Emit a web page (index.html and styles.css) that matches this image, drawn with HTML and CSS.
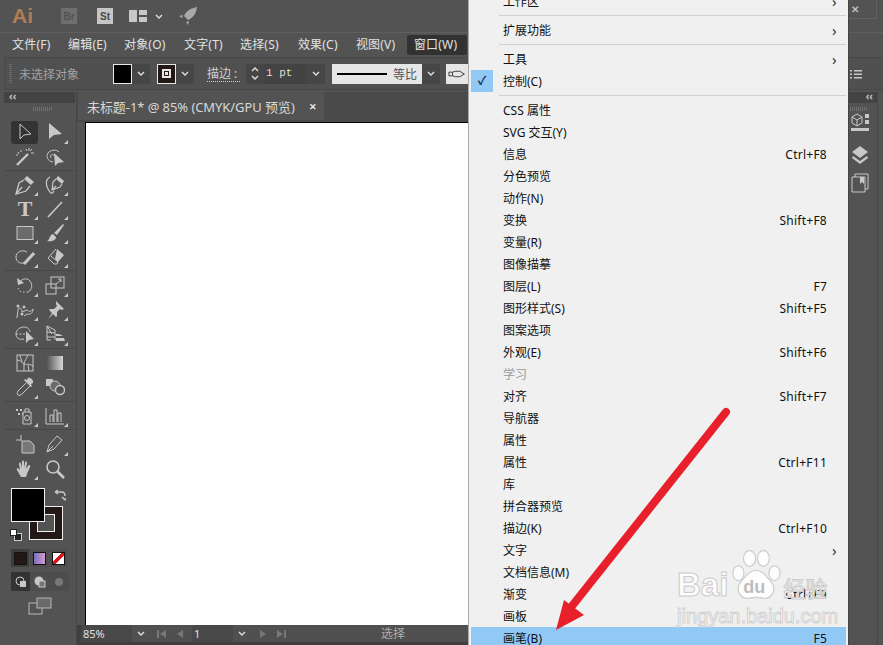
FILE: index.html
```html
<!DOCTYPE html>
<html lang="zh-CN">
<head>
    <meta charset="UTF-8">
    <title>Adobe Illustrator</title>
    <link rel="stylesheet" href="styles.css">
</head>
<body>
<div class="app">
    <!-- app bar -->
    <header class="titlebar">
        <span class="ai-logo">Ai</span>
        <span class="app-chip chip-br">Br</span>
        <span class="app-chip chip-st">St</span>
        <svg class="layout-icon" viewBox="0 0 18 12"><path d="M0 0h8v12H0zM10 0h8v5h-8zM10 7h8v5h-8z" fill="#c8c8c8"/></svg>
        <svg class="chev chev-top" viewBox="0 0 8 5"><path d="M1 1l3 3 3-3" /></svg>
        <svg class="rocket" viewBox="0 0 18 18"><path d="M18 0C12 1 7 4 5 9l4 4c5-2 8-6 9-13zM4 8L0 9l3 2zM10 14l-1 4-2-3z" fill="#a8a8a8"/></svg>
        <div class="window-close"><span>✕</span></div>
    </header>

    <nav class="menubar">
        <span class="menubar-item">文件(F)</span>
        <span class="menubar-item">编辑(E)</span>
        <span class="menubar-item">对象(O)</span>
        <span class="menubar-item">文字(T)</span>
        <span class="menubar-item">选择(S)</span>
        <span class="menubar-item">效果(C)</span>
        <span class="menubar-item">视图(V)</span>
        <span class="menubar-item active">窗口(W)</span>
    </nav>

    <!-- control panel -->
    <div class="controlbar">
        <div class="control-panel">
            <span class="grip"></span>
            <span class="no-selection">未选择对象</span>
            <span class="swatch swatch-fill"></span>
            <span class="drop"><svg class="chev" viewBox="0 0 8 5"><path d="M1 1l3 3 3-3" /></svg></span>
            <span class="swatch swatch-stroke"><i></i></span>
            <span class="drop"><svg class="chev" viewBox="0 0 8 5"><path d="M1 1l3 3 3-3" /></svg></span>
            <span class="stroke-label">描边 :</span>
            <span class="spinner">
                <svg class="chev flip" viewBox="0 0 8 5"><path d="M1 1l3 3 3-3" /></svg>
                <svg class="chev" viewBox="0 0 8 5"><path d="M1 1l3 3 3-3" /></svg>
            </span>
            <span class="weight">1 pt</span>
            <span class="drop"><svg class="chev" viewBox="0 0 8 5"><path d="M1 1l3 3 3-3" /></svg></span>
            <span class="stroke-preview"><i></i><b>等比</b></span>
            <span class="drop"><svg class="chev" viewBox="0 0 8 5"><path d="M1 1l3 3 3-3" /></svg></span>
            <span class="brush-preview">
                <svg viewBox="0 0 22 10"><path d="M1 3h4v4H1zM5 3l3-1h5l5 3-5 3H8L5 7" fill="none" stroke="#333"/></svg>
            </span>
        </div>
    </div>

    <div class="workspace">
        <!-- tools -->
        <aside class="toolbar">
            <div class="panel-head"><span>‹‹</span></div>
            <div class="panel-grip"></div>

            <div class="tool-group">
                <span class="tool selected"><svg viewBox="0 0 20 20"><path class="ln" d="M5 2v15l4-4 7-1z"/></svg></span>
                <span class="tool more"><svg viewBox="0 0 20 20"><path class="fl" d="M4 1v16l5-4 8-1z"/></svg></span>
                <span class="tool"><svg viewBox="0 0 20 20"><path class="ln" d="M2 18L13 7" stroke-width="2.4"/><path class="ln" d="M14 1v3M16 6h3M11 2l1 2M17 2l-2 2M3 5l1 2M6 3v2M1 8h2"/></svg></span>
                <span class="tool"><svg viewBox="0 0 20 20"><path class="ln" d="M8 15C2 14 1 9 3 6s8-4 11-1"/><path class="ln" d="M6 11c-2-3 2-5 3-2"/><path class="fl" d="M9 6l1 13 3-3 6-1z"/></svg></span>
            </div>

            <div class="tool-group tight">
                <span class="tool more"><svg viewBox="0 0 20 20"><path class="fl" d="M12 1l7 6-3 3-7-6z"/><path class="ln" d="M9 5L4 8 1 19l10-3 4-5M1 19l6-7" stroke-width="1.3"/></svg></span>
                <span class="tool more"><svg viewBox="0 0 20 20"><path class="fl" d="M13 1l6 5-2 3-6-5z"/><path class="ln" d="M11 4L8 7 7 15l8-3 2-3M7 15l4-4" stroke-width="1.2"/><path class="ln" d="M5 2C0 5 1 10 3 14s4 6 6 2" stroke-width="1.2"/></svg></span>
                <span class="tool more"><span class="type-t">T</span></span>
                <span class="tool more"><svg viewBox="0 0 20 20"><path class="ln" d="M3 18L17 3" stroke-width="1.6"/></svg></span>
                <span class="tool more"><svg viewBox="0 0 20 20"><rect x="2" y="3.5" width="16" height="13" fill="#6b6b6b" stroke="#c8c8c8"/></svg></span>
                <span class="tool more"><svg viewBox="0 0 20 20"><path class="fl" d="M18 1l1 1-7 10-3-2zM8 11l3 3c0 3-4 5-9 4 3-1 2-6 6-7z"/></svg></span>
                <span class="tool more"><svg viewBox="0 0 20 20"><path class="ln" d="M11 15C6 18 1 15 1 10s6-8 11-5"/><path class="ln" d="M9 17L19 6" stroke-width="3"/></svg></span>
                <span class="tool more"><svg viewBox="0 0 20 20"><path class="fl" d="M12 2l7 6-6 7-3-3z"/><path class="ln" d="M11 2L3 11l6 6h3l1-2-7-6"/></svg></span>
            </div>

            <div class="tool-group">
                <span class="tool more"><svg viewBox="0 0 20 20"><path class="ln" d="M4 9c1-5 8-7 11-3s2 9-2 11"/><path class="ln" d="M13 17H7c-2 0-3-2-4-4" stroke-dasharray="1.5 2"/><path class="fl" d="M2 3l1 7 6-2z"/></svg></span>
                <span class="tool more"><svg viewBox="0 0 20 20"><rect class="ln" x="1" y="9" width="10" height="10"/><rect class="ln" x="6" y="2" width="13" height="11"/><path class="ln" d="M11 9l5-4M13 4h3v3"/></svg></span>
                <span class="tool more"><svg viewBox="0 0 20 20"><path class="ln" d="M2 18c0-3 1-5 1-9 2-2 4 0 4 3l5-2c2 0 2 4 6-1 0 4-3 6-6 5l-3 2"/><circle class="fl" cx="3" cy="6" r="1.5"/><circle class="fl" cx="9" cy="7" r="1.5"/><circle class="fl" cx="7" cy="14" r="1.5"/></svg></span>
                <span class="tool more"><svg viewBox="0 0 20 20"><path class="fl" d="M11 1l8 8-2 1-2-1-3 3v4l-1 1-3-3-5 5 4-6-3-3 1-1h4l3-3-1-2z"/></svg></span>
                <span class="tool more"><svg viewBox="0 0 20 20"><path class="ln" d="M9 15c-5 1-8-1-8-5s4-7 8-7 6 3 6 5"/><path class="ln" d="M1 10h11" stroke-dasharray="2 1.5"/><path class="fl" d="M11 7v12l3-3 5-1z"/></svg></span>
                <span class="tool more"><svg viewBox="0 0 20 20"><path class="ln" d="M2 2v14h4M2 2l8 4v10M2 2l5 8M2 8l8 1M2 13h8"/><path class="fl" d="M11 10h3l4 2h-7zM11 14h8l1 3h-9z"/></svg></span>
            </div>

            <div class="tool-group">
                <span class="tool"><svg viewBox="0 0 20 20"><rect class="ln" x="2" y="2" width="16" height="16"/><path class="ln" d="M2 7c4 0 5 3 7 4s4-1 9 2M9 11V18M9 11c0-3 3-6 4-9M5 2c0 3 2 5 2 7M13 12l1 6"/></svg></span>
                <span class="tool"><svg viewBox="0 0 20 20"><defs><linearGradient id="toolGrad"><stop offset="0" stop-color="#555"/><stop offset="1" stop-color="#d8d8d8"/></linearGradient></defs><rect x="2" y="3" width="16" height="14" fill="url(#toolGrad)"/></svg></span>
                <span class="tool more"><svg viewBox="0 0 20 20"><path class="ln" d="M11 6L3 14c-1 2-1 3 0 4 1 1 3 0 4-1l8-8"/><path class="fl" d="M13 1c2-1 6 2 5 5l-2 1 1 2-1 1-7-7 1-1 2 1z"/></svg></span>
                <span class="tool"><svg viewBox="0 0 20 20"><rect class="fl" x="1" y="2" width="7" height="7"/><circle cx="10" cy="9" r="5" fill="#6b6b6b" stroke="#c8c8c8"/><circle cx="15" cy="13" r="4.5" fill="#535353" stroke="#c8c8c8" stroke-width="1.4"/></svg></span>
            </div>

            <div class="tool-group">
                <span class="tool more"><svg viewBox="0 0 20 20"><path class="ln" d="M8 6h8v12H8zM10 6V3h4v3"/><circle class="ln" cx="12" cy="12" r="2.5"/><path class="fl" d="M1 3h2v2H1zM5 3h2v2H5zM3 7h2v2H3zM7 7h1v2H7z"/></svg></span>
                <span class="tool more"><svg viewBox="0 0 20 20"><path class="ln" d="M1 2v16h18"/><path class="ln" d="M5 16V9h3v7M9 16V4h3v12M13 16V7h3v9"/></svg></span>
            </div>

            <div class="tool-group no-rule">
                <span class="tool"><svg viewBox="0 0 20 20"><path class="ln" d="M6 1v6M1 6h5"/><path d="M7 7h8l4 4v8H7z" fill="#777" stroke="#c8c8c8"/></svg></span>
                <span class="tool more"><svg viewBox="0 0 20 20"><path class="ln" d="M2 18l2-7 8-9 5 4-8 9zM2 18l6-6"/></svg></span>
                <span class="tool more"><svg viewBox="0 0 20 20"><path class="fl" d="M6 18L2 11c-1-2 1-2 2-1l1 1-1-6c0-2 2-2 2 0l1 4 0-6c0-2 2-2 2 0v6l1-5c0-2 2-2 2 0l-1 6 2-3c1-2 3-1 2 1l-3 7-1 3z"/></svg></span>
                <span class="tool"><svg viewBox="0 0 20 20"><circle class="ln" cx="8" cy="8" r="6" stroke-width="1.6"/><path class="ln" d="M12.5 12.5L19 19" stroke-width="2.6"/></svg></span>
            </div>

            <!-- fill and stroke -->
            <div class="color-box">
                <span class="big-stroke"><i></i></span>
                <span class="big-fill"></span>
                <svg class="swap-icon" viewBox="0 0 12 12"><path d="M1 3h7c2 0 3 2 3 4M1 3l3-2M1 3l3 2M11 11L8 8M11 11l2-3" fill="none" stroke="#c8c8c8" stroke-width="1.4"/></svg>
                <span class="default-colors"><i></i><b></b></span>
            </div>
            <div class="paint-modes">
                <span class="mode on"><i class="mode-color"></i></span>
                <span class="mode"><i class="mode-grad"></i></span>
                <span class="mode"><i class="mode-none"></i></span>
            </div>
            <div class="draw-modes">
                <span class="draw on"><svg viewBox="0 0 14 14"><circle class="ln" cx="6" cy="6" r="4"/><rect class="fl" x="6" y="6" width="6" height="6"/></svg></span>
                <span class="draw"><svg viewBox="0 0 14 14"><circle class="fl" cx="6" cy="6" r="4.5"/><rect x="6" y="6" width="6" height="6" fill="#777" stroke="#c8c8c8"/></svg></span>
                <span class="draw off"><svg viewBox="0 0 14 14"><circle cx="7" cy="7" r="4" fill="#777"/></svg></span>
            </div>
            <svg class="screen-mode" viewBox="0 0 24 18"><rect x="1" y="6" width="13" height="11" fill="none" stroke="#b8b8b8"/><rect x="9" y="1" width="14" height="10" fill="#6a6a6a" stroke="#b8b8b8"/></svg>
        </aside>

        <!-- document -->
        <main class="doc">
            <div class="tabbar">
                <div class="tab">
                    <span>未标题-1* @ 85% (CMYK/GPU 预览)</span>
                    <b class="tab-close">✕</b>
                </div>
            </div>
            <div class="canvas-wrap">
                <div class="canvas"></div>
            </div>
            <div class="statusbar">
                <span class="status-field zoom-field">85%</span>
                <span class="status-drop"><svg class="chev" viewBox="0 0 8 5"><path d="M1 1l3 3 3-3" /></svg></span>
                <span class="nav">
                    <svg viewBox="0 0 12 10"><path d="M1 1h2v8H1zM10 1v8L4 5z"/></svg>
                    <svg viewBox="0 0 12 10"><path d="M9 1v8L3 5z"/></svg>
                </span>
                <span class="status-field page-field">1</span>
                <span class="status-drop"><svg class="chev" viewBox="0 0 8 5"><path d="M1 1l3 3 3-3" /></svg></span>
                <span class="nav">
                    <svg viewBox="0 0 12 10"><path d="M3 1v8l6-4z"/></svg>
                    <svg viewBox="0 0 12 10"><path d="M2 1v8l6-4zM9 1h2v8H9z"/></svg>
                </span>
                <span class="status-text">选择</span>
            </div>
        </main>

        <!-- right dock -->
        <aside class="dock">
            <div class="panel-head"><span>‹‹</span></div>
            <div class="panel-grip"></div>
            <svg class="dock-icon icon-cube" viewBox="0 0 20 20"><path class="ln" d="M2 5l5-3 5 3v6l-5 3-5-3zM2 5l5 3 5-3M7 8v6"/><path class="fl" d="M15 2h4v4h-4zM15 8h4v4h-4zM1 16h18v3H1z"/></svg>
            <svg class="dock-icon icon-layers" viewBox="0 0 20 20"><path class="fl" d="M10 1l8 6-8 6-8-6zM3 11l7 5 7-5 1 2-8 6-8-6z"/></svg>
            <svg class="dock-icon icon-book" viewBox="0 0 20 20"><path class="ln" d="M2 4h13v15H2zM5 4V1h13v15h-3"/><path class="fl" d="M10 4h4v7l-2-2-2 2z"/></svg>
        </aside>
    </div>

    <svg class="dock-list" viewBox="0 0 12 10"><path d="M0 1h2v1.4H0zM4 1h8v1.4H4zM0 4.5h2v1.4H0zM4 4.5h8v1.4H4zM0 8h2v1.4H0zM4 8h8v1.4H4z" fill="#c8c8c8"/></svg>

    <!-- window menu -->
    <div class="menu">
        <div class="menu-row"><span>工作区</span><em></em><i>›</i></div>
        <div class="menu-sep"></div>
        <div class="menu-row"><span>扩展功能</span><em></em><i>›</i></div>
        <div class="menu-sep"></div>
        <div class="menu-row"><span>工具</span><em></em><i>›</i></div>
        <div class="menu-row checked"><span>控制(C)</span><em></em><i></i></div>
        <div class="menu-sep"></div>
        <div class="menu-row"><span>CSS 属性</span><em></em><i></i></div>
        <div class="menu-row"><span>SVG 交互(Y)</span><em></em><i></i></div>
        <div class="menu-row"><span>信息</span><em>Ctrl+F8</em><i></i></div>
        <div class="menu-row"><span>分色预览</span><em></em><i></i></div>
        <div class="menu-row"><span>动作(N)</span><em></em><i></i></div>
        <div class="menu-row"><span>变换</span><em>Shift+F8</em><i></i></div>
        <div class="menu-row"><span>变量(R)</span><em></em><i></i></div>
        <div class="menu-row"><span>图像描摹</span><em></em><i></i></div>
        <div class="menu-row"><span>图层(L)</span><em>F7</em><i></i></div>
        <div class="menu-row"><span>图形样式(S)</span><em>Shift+F5</em><i></i></div>
        <div class="menu-row"><span>图案选项</span><em></em><i></i></div>
        <div class="menu-row"><span>外观(E)</span><em>Shift+F6</em><i></i></div>
        <div class="menu-row disabled"><span>学习</span><em></em><i></i></div>
        <div class="menu-row"><span>对齐</span><em>Shift+F7</em><i></i></div>
        <div class="menu-row"><span>导航器</span><em></em><i></i></div>
        <div class="menu-row"><span>属性</span><em></em><i></i></div>
        <div class="menu-row"><span>属性</span><em>Ctrl+F11</em><i></i></div>
        <div class="menu-row"><span>库</span><em></em><i></i></div>
        <div class="menu-row"><span>拼合器预览</span><em></em><i></i></div>
        <div class="menu-row"><span>描边(K)</span><em>Ctrl+F10</em><i></i></div>
        <div class="menu-row"><span>文字</span><em></em><i>›</i></div>
        <div class="menu-row"><span>文档信息(M)</span><em></em><i></i></div>
        <div class="menu-row"><span>渐变</span><em>Ctrl+F9</em><i></i></div>
        <div class="menu-row"><span>画板</span><em></em><i></i></div>
        <div class="menu-row hover"><span>画笔(B)</span><em>F5</em><i></i></div>
    </div>

    <!-- baidu watermark -->
    <div class="watermark">
        <div class="wm-top">
            <span class="wm-bai">Bai</span>
            <span class="wm-paw">
                <svg viewBox="0 0 54 56">
                    <g fill="#fdfdfd" stroke="#cfcfcf" stroke-width="1.4">
                        <ellipse cx="8" cy="25" rx="6" ry="8"/>
                        <ellipse cx="20" cy="9" rx="6.5" ry="8.5"/>
                        <ellipse cx="35" cy="9" rx="6.5" ry="8.5"/>
                        <ellipse cx="47" cy="25" rx="6" ry="8"/>
                        <path d="M27 22c8 0 12 8 17 13 5 7 1 18-9 17-3 0-5-1-8-1s-5 1-8 1C9 53 5 42 10 35c5-5 9-13 17-13z"/>
                    </g>
                </svg>
                <b>du</b>
            </span>
            <span class="wm-cn">经验</span>
        </div>
        <div class="wm-url">jingyan.baidu.com</div>
    </div>

    <!-- red arrow annotation -->
    <svg class="annotation" viewBox="0 0 883 645">
        <path d="M726 412L572 606" stroke="#e8202c" stroke-width="8" stroke-linecap="round" fill="none"/>
        <path d="M556 630L564 600L584 615z" fill="#e8202c"/>
    </svg>
</div>
</body>
</html>
```

FILE: styles.css
```css
* {
    box-sizing: border-box;
}
body {
    margin: 0;
    background-color: #535353;
    font-family: "Noto Sans", "Noto Sans CJK SC", sans-serif;
    font-size: 12px;
}
.app {
    position: relative;
    width: 883px;
    height: 645px;
    overflow: hidden;
    display: flex;
    flex-direction: column;
    background-color: #535353;
    color: #d6d6d6;
}
.ln {
    fill: none;
    stroke: #c8c8c8;
}
.fl {
    fill: #c8c8c8;
}
.chev {
    width: 8px;
    height: 5px;
    fill: none;
    stroke: #e0e0e0;
    stroke-width: 1.4;
}
.chev.flip {
    transform: scaleY(-1);
}

/* app bar */
.titlebar {
    position: relative;
    height: 33px;
    flex: none;
    display: flex;
    align-items: center;
    padding-left: 12px;
    border-bottom: 1px solid #5f5f5f;
}
.ai-logo {
    width: 49px;
    color: #b27d55;
    font-family: "Liberation Sans", sans-serif;
    font-size: 21px;
    font-weight: bold;
}
.app-chip {
    width: 16px;
    height: 16px;
    margin-right: 20px;
    display: flex;
    align-items: center;
    justify-content: center;
    font-family: "Liberation Sans", sans-serif;
    font-size: 10px;
    font-weight: bold;
}
.chip-br {
    background-color: #6e6e6e;
    color: #525252;
}
.chip-st {
    margin-right: 16px;
    background-color: #c6c6c6;
    color: #484848;
}
.layout-icon {
    width: 18px;
    height: 12px;
}
.chev-top {
    margin-left: 8px;
}
.rocket {
    width: 18px;
    height: 18px;
    margin-left: 16px;
}
.window-close {
    position: absolute;
    left: 840px;
    top: 0;
    width: 37px;
    height: 19px;
    padding-left: 10px;
    border: 1px solid #626262;
    border-top: none;
    border-radius: 0 0 3px 3px;
    color: #bdbdbd;
    font-size: 10px;
    font-weight: bold;
    line-height: 19px;
}

/* menu bar */
.menubar {
    height: 24px;
    flex: none;
    display: flex;
    align-items: center;
    gap: 2.6px;
    padding-left: 5px;
}
.menubar-item {
    width: 53.4px;
    padding-left: 7px;
    line-height: 20px;
    color: #e2e2e2;
    border-radius: 2px;
    white-space: nowrap;
    letter-spacing: 0.2px;
}
.menubar-item:nth-child(5),
.menubar-item:nth-child(6),
.menubar-item:nth-child(7) {
    width: 55.4px;
}
.menubar-item:nth-child(3) {
    width: 57.4px;
}
.menubar-item.active {
    background-color: #323232;
    width: 60px;
}

/* control bar */
.controlbar {
    height: 35px;
    flex: none;
    padding-left: 4px;
}
.control-panel {
    height: 33px;
    display: flex;
    align-items: center;
    border: 1px solid #474747;
    border-right: none;
    background-color: #505050;
    padding-left: 4px;
}
.grip {
    width: 3px;
    height: 20px;
    margin-right: 7px;
    background-image: repeating-linear-gradient(#6c6c6c 0 1px, transparent 1px 2px);
}
.no-selection {
    width: 94px;
    color: #a2a2a2;
    letter-spacing: 0;
}
.swatch {
    width: 19px;
    height: 20px;
    border: 1px solid #e8e8e8;
}
.swatch-fill {
    background-color: #000;
}
.swatch-stroke {
    margin-left: 1px;
    background-color: #231815;
    display: flex;
    align-items: center;
    justify-content: center;
}
.swatch-stroke i {
    width: 9px;
    height: 9px;
    border: 2px solid #e8e8e8;
    box-shadow: inset 0 0 0 1px #231815, inset 0 0 0 3px #e8e8e8;
}
.drop {
    width: 18px;
    height: 20px;
    margin-right: 6px;
    display: flex;
    align-items: center;
    justify-content: center;
    background-color: #464646;
}
.stroke-label {
    width: 33px;
    margin: 0 6px 0 7px;
    color: #d0d0d0;
    border-bottom: 1px dotted #cfcfcf;
    line-height: 15px;
    white-space: nowrap;
}
.spinner {
    width: 18px;
    height: 20px;
    display: flex;
    flex-direction: column;
    align-items: center;
    justify-content: center;
    gap: 3px;
    background-color: #464646;
}
.weight {
    width: 43px;
    height: 20px;
    padding-left: 2px;
    background-color: #434343;
    color: #dedede;
    font-family: "Liberation Mono", monospace;
    font-size: 11px;
    line-height: 18px;
    white-space: pre;
}
.weight + .drop {
    margin-right: 7px;
}
.stroke-preview {
    width: 90px;
    height: 20px;
    display: flex;
    align-items: center;
    gap: 6px;
    padding-left: 5px;
    background-color: #e6e6e6;
}
.stroke-preview i {
    width: 50px;
    height: 2px;
    background-color: #000;
}
.stroke-preview b {
    color: #555;
    font-weight: normal;
}
.brush-preview {
    width: 40px;
    height: 20px;
    padding: 5px 0 0 2px;
    background-color: #e6e6e6;
}
.brush-preview svg {
    display: block;
    width: 20px;
    height: 10px;
}

/* main area */
.workspace {
    flex: 1;
    display: flex;
    min-height: 0;
}
.toolbar {
    width: 77px;
    flex: none;
    padding-left: 4px;
    display: flex;
    flex-direction: column;
    border-right: 1px solid #464646;
}
.toolbar > * {
    width: 71px;
}
.panel-head {
    height: 11px;
    flex: none;
    background-color: #434343;
    color: #c4c4c4;
    font-size: 10px;
    font-weight: bold;
    line-height: 9px;
    padding-left: 5px;
}
.panel-grip {
    height: 4px;
    flex: none;
    margin: 4px auto 5px;
    width: 20px;
    background-image: repeating-linear-gradient(90deg, #6f6f6f 0 1px, transparent 1px 2px);
}
.toolbar > .panel-grip {
    width: 20px;
    margin: 4px 0 9px 29px;
}
.tool-group {
    display: grid;
    grid-template-columns: 30px 30px;
    grid-auto-rows: 24.5px;
    padding: 0 0 1px 6px;
    margin-bottom: 2px;
    border-bottom: 1px solid #474747;
}
.tool-group.tight {
    grid-auto-rows: 24px;
}
.tool-group.no-rule {
    border-bottom: none;
    margin-bottom: 6px;
}
.tool {
    position: relative;
    display: flex;
    align-items: center;
    justify-content: center;
}
.tool svg {
    width: 20px;
    height: 20px;
}
.tool.selected {
    background-color: #333;
    border-radius: 3px;
    margin: 1px 2px 1px 1px;
}
.tool.more::after {
    content: "";
    position: absolute;
    right: 2px;
    bottom: 1px;
    border-left: 4px solid transparent;
    border-bottom: 4px solid #c8c8c8;
}
.type-t {
    color: #c8c8c8;
    font-family: "Liberation Serif", serif;
    font-size: 22px;
    font-weight: bold;
    line-height: 22px;
}

/* fill and stroke */
.color-box {
    position: relative;
    height: 55px;
    flex: none;
}
.big-fill {
    position: absolute;
    left: 7px;
    top: 0;
    width: 34px;
    height: 34px;
    background-color: #000;
    border: 1px solid #f0f0f0;
}
.big-stroke {
    position: absolute;
    left: 25px;
    top: 18px;
    width: 34px;
    height: 34px;
    background-color: #231815;
    border: 1px solid #f0f0f0;
    padding: 7px;
}
.big-stroke i {
    display: block;
    width: 18px;
    height: 18px;
    background-color: #535353;
    border: 1px solid #f0f0f0;
}
.swap-icon {
    position: absolute;
    left: 50px;
    top: 1px;
    width: 12px;
    height: 12px;
}
.default-colors {
    position: absolute;
    left: 6px;
    top: 41px;
    width: 12px;
    height: 12px;
}
.default-colors i {
    position: absolute;
    left: 0;
    top: 0;
    width: 7px;
    height: 7px;
    background-color: #fff;
    border: 1px solid #222;
    z-index: 1;
}
.default-colors b {
    position: absolute;
    right: 0;
    bottom: 0;
    width: 8px;
    height: 8px;
    background-color: #222;
    border: 1px solid #ccc;
}
.paint-modes {
    display: flex;
    height: 18px;
    flex: none;
    margin: 6px 0 0 7px;
    gap: 1px;
}
.mode {
    width: 18px;
    display: flex;
    align-items: center;
    justify-content: center;
    background-color: #4d4d4d;
}
.mode.on {
    background-color: #3d3d3d;
}
.mode i {
    display: block;
    width: 13px;
    height: 13px;
    border: 1px solid #111;
}
.mode-color {
    background-color: #231815;
}
.mode-grad {
    background: linear-gradient(90deg, #7a6fc0, #d49ad0);
}
.mode-none {
    background: linear-gradient(135deg, #fff 38%, #d8141c 38% 62%, #fff 62%);
}
.draw-modes {
    display: flex;
    height: 19px;
    flex: none;
    margin: 5px 0 0 7px;
    background-color: #4d4d4d;
    width: 58px;
}
.draw {
    width: 19px;
    display: flex;
    align-items: center;
    justify-content: center;
}
.draw.on {
    background-color: #333;
}
.draw svg {
    width: 14px;
    height: 14px;
}
.screen-mode {
    width: 24px;
    height: 18px;
    flex: none;
    margin: 6px 0 0 24px;
}

/* document */
.doc {
    flex: 1;
    min-width: 0;
    display: flex;
    flex-direction: column;
}
.tabbar {
    height: 30px;
    padding: 0 0 2px 1px;
    flex: none;
    background-color: #4a4a4a;
}
.tab {
    width: 246px;
    height: 28px;
    display: flex;
    align-items: center;
    justify-content: space-between;
    padding: 0 7px 0 9px;
    background-color: #535353;
    color: #d8d8d8;
    font-size: 13px;
    letter-spacing: -0.07px;
    white-space: nowrap;
}
.tab-close {
    font-size: 9px;
    color: #e8e8e8;
}
.canvas-wrap {
    flex: 1;
    min-height: 0;
    padding-left: 8px;
    background-color: #535353;
}
.canvas {
    height: 100%;
    background-color: #fff;
    border-left: 1px solid #000;
    border-top: 1px solid #000;
}
.statusbar {
    height: 20px;
    flex: none;
    display: flex;
    padding: 0 0 3px 4px;
    background-color: #3f3f3f;
    align-items: stretch;
}
.status-field {
    background-color: #484848;
    color: #e0e0e0;
    line-height: 17px;
    padding-left: 2px;
    font-size: 11px;
}
.zoom-field {
    width: 51px;
}
.page-field {
    width: 41px;
}
.status-drop {
    width: 18px;
    display: flex;
    align-items: center;
    justify-content: center;
    background-color: #505050;
}
.nav {
    width: 42px;
    display: flex;
    align-items: center;
    justify-content: center;
    gap: 6px;
    background-color: #505050;
}
.nav svg {
    width: 12px;
    height: 10px;
    fill: #787878;
}
.status-text {
    flex: 1;
    padding-left: 88px;
    background-color: #505050;
    color: #adadad;
    line-height: 17px;
}

/* right dock */
.dock {
    width: 30px;
    flex: none;
    margin-right: 5px;
    display: flex;
    flex-direction: column;
    border-right: 1px solid #464646;
}
.dock .panel-head {
    width: 100%;
    text-align: right;
    padding-right: 4px;
}
.dock .panel-grip {
    margin: 4px 0 0;
}
.dock-icon {
    width: 20px;
    height: 20px;
    flex: none;
    margin-left: 2px;
}
.icon-cube {
    margin-top: 1px;
}
.icon-layers {
    margin-top: 13px;
}
.icon-book {
    margin-top: 8px;
}
.dock-list {
    position: absolute;
    left: 850px;
    top: 69px;
    width: 12px;
    height: 10px;
}

/* window menu */
.menu {
    position: absolute;
    left: 469px;
    top: -10px;
    width: 379px;
    padding: 0 2px;
    background-color: #f0f0f0;
    box-shadow: -1px 0 0 #aaa, 1px 0 0 #444;
    color: #111;
}
.menu-row {
    height: 22px;
    display: grid;
    grid-template-columns: 32px 1fr auto 19px;
    align-items: center;
}
.menu-row span {
    grid-column: 2;
    white-space: nowrap;
}
.menu-row em {
    grid-column: 3;
    font-style: normal;
    letter-spacing: 0.25px;
}
.menu-row i {
    grid-column: 4;
    font-style: normal;
    font-size: 15px;
    line-height: 20px;
    padding-left: 5px;
    color: #333;
}
.menu-row.disabled {
    color: #9a9a9a;
}
.menu-row.hover {
    background-color: #90c8f6;
}
.menu-row.checked {
    position: relative;
}
.menu-row.checked::before {
    content: "✓";
    position: absolute;
    left: 0;
    top: 0;
    width: 22px;
    height: 22px;
    background-color: #90c8f6;
    color: #16304f;
    font-size: 12px;
    font-weight: bold;
    line-height: 22px;
    text-align: center;
}
.menu-sep {
    height: 7px;
    margin-left: 28px;
    padding-top: 3px;
}
.menu-sep::before {
    content: "";
    display: block;
    height: 1px;
    background-color: #d0d0d0;
}

/* watermark */
.watermark {
    position: absolute;
    left: 677px;
    top: 550px;
    width: 160px;
    color: #fdfdfd;
    font-family: "Liberation Sans", sans-serif;
}
.wm-top {
    display: flex;
    align-items: flex-end;
    height: 52px;
}
.wm-bai {
    font-size: 33px;
    font-weight: bold;
    line-height: 34px;
    -webkit-text-stroke: 1px #cbcbcb;
}
.wm-paw {
    position: relative;
    width: 50px;
    height: 52px;
    margin: 0 2px 0 3px;
}
.wm-paw svg {
    width: 100%;
    height: 100%;
}
.wm-paw b {
    position: absolute;
    left: 12px;
    top: 27px;
    color: #bdbdbd;
    font-size: 18px;
}
.wm-cn {
    font-family: "Noto Sans CJK SC", sans-serif;
    font-size: 22px;
    line-height: 30px;
    white-space: nowrap;
    -webkit-text-stroke: 1px #cbcbcb;
}
.wm-url {
    margin-top: 2px;
    font-size: 20px;
    line-height: 24px;
    white-space: nowrap;
    -webkit-text-stroke: 1px #d2d2d2;
}

.annotation {
    position: absolute;
    left: 0;
    top: 0;
    width: 883px;
    height: 645px;
    pointer-events: none;
}
```
